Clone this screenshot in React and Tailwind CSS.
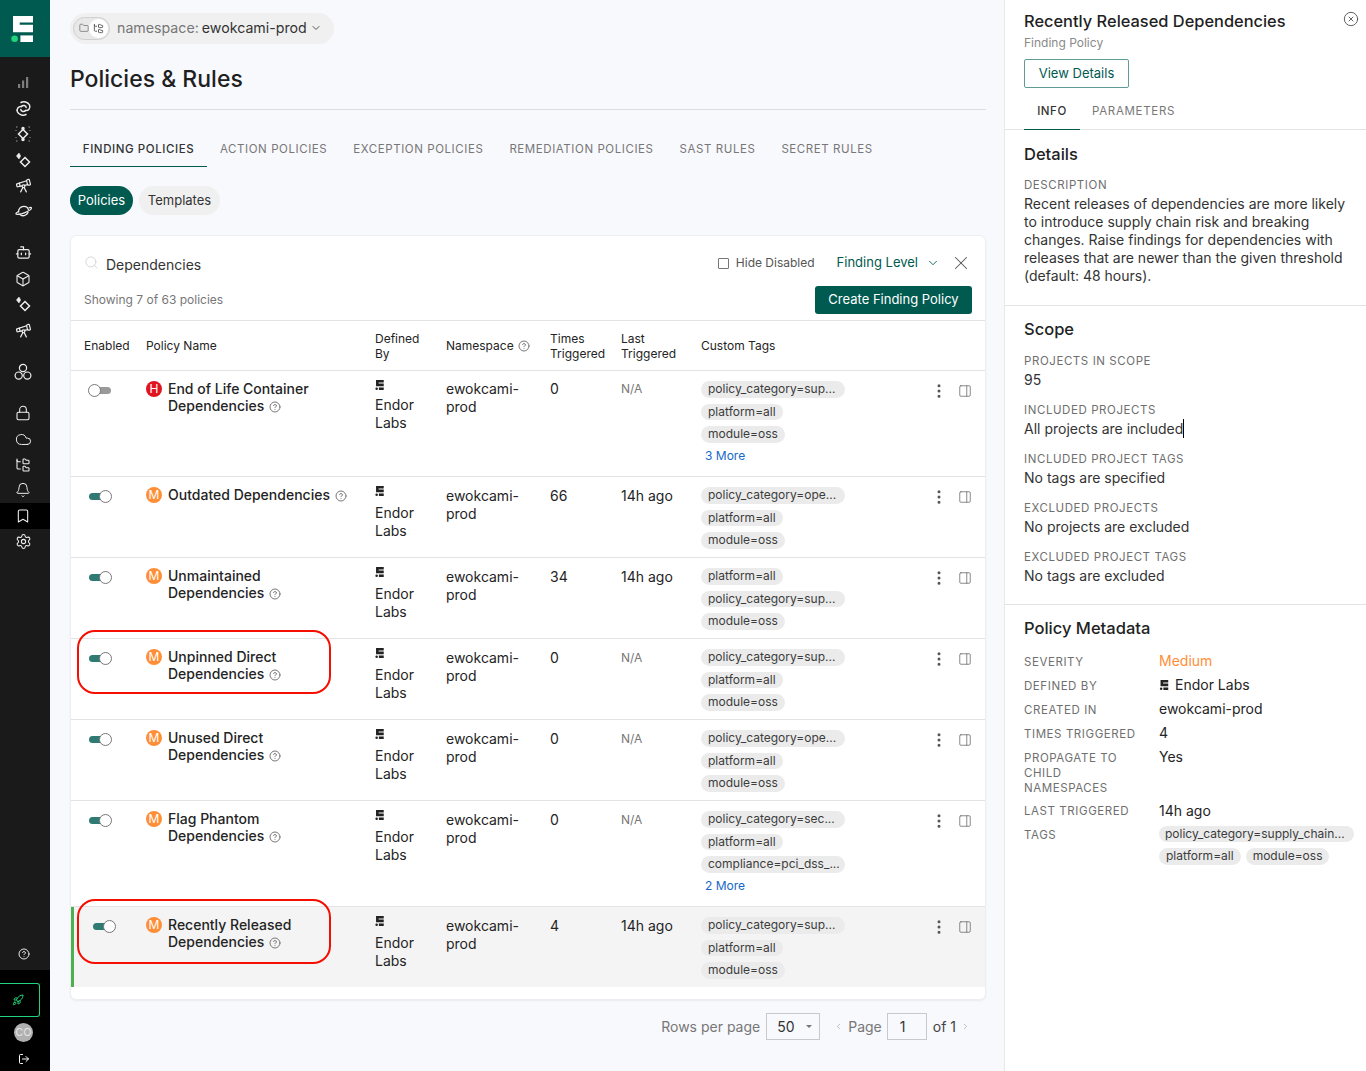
import {
  Bell, Bookmark, Bot, Box, ChevronDown, ChevronLeft, ChevronRight, CircleHelp, CircleX,
  Cloud, EllipsisVertical, FolderTree, Folder, Lock, LogOut, PanelRight, Rocket, Search,
  Settings, Telescope, X,
} from 'lucide-react';

// Endor logo mark, also used small in the table
function EndorMark({ className, dot = '#22d37a', fill = '#fff' }) {
  return (
    <svg viewBox="-2 0 22 26" className={className}>
      <path d="M0 0H20V6.600H6.700V8.800H20V16.300H0Z" fill={fill} />
      <circle cx="1.600" cy="22.700" r="3.300" fill={dot} />
      <rect x="7.400" y="19.400" width="12.600" height="6.600" fill={fill} />
    </svg>
  );
}

function Bars() {
  return (
    <svg width="12" height="13" viewBox="0 0 12 13" fill="#7d7d7d">
      <rect x="1" y="8" width="2.200" height="4" />
      <rect x="5" y="4.500" width="2.200" height="7.500" />
      <rect x="9" y="1" width="2.200" height="11" />
    </svg>
  );
}

function GalaxyIcon() {
  return (
    <svg width="17" height="17" viewBox="0 0 17 17" fill="none" stroke="currentColor" strokeWidth="1.5" strokeLinecap="round">
      <path d="M6 2.500C8.500 1 13 2 14.500 5 16 8.500 13 11 10.500 10.500" />
      <path d="M11 14.500C8.500 16 4 15 2.500 12 1 8.500 4 6 6.500 6.500" />
      <path d="M6.500 6.500C8 4.500 11 5.500 11.200 7.500M10.500 10.500C9 12.500 6 11.500 5.800 9.500" />
    </svg>
  );
}

function SparkDiamond({ size = 16 }) {
  return (
    <svg width={size} height={size} viewBox="0 0 16 16" fill="none" stroke="currentColor" strokeWidth="1.5">
      <path d="M10 5.500 14.500 10 10 14.500 5.500 10Z" />
      <path d="M4 1 5.600 4 4 7 1.500 4Z" fill="currentColor" strokeWidth="0.6" />
    </svg>
  );
}

function ScanDiamond() {
  return (
    <svg width="16" height="16" viewBox="0 0 16 16" fill="none" stroke="currentColor" strokeWidth="1.5">
      <path d="M8 3.500 12.500 8 8 12.500 3.500 8Z" />
      <circle cx="8" cy="2.400" r="1" fill="currentColor" />
      <circle cx="8" cy="13.600" r="1" fill="currentColor" />
      <path d="M1 1h1.500M13.500 1H15M1 15h1.500M13.500 15H15M1 4v1M15 4v1M1 11v1M15 11v1" strokeWidth="1" opacity="0.6" />
    </svg>
  );
}

function Planet() {
  return (
    <svg width="17" height="16" viewBox="0 0 17 16" fill="none" stroke="currentColor" strokeWidth="1.3">
      <path d="M3.600 9.500C3 6 5.600 3.300 8.800 3.300c2.400 0 4.300 1.500 4.700 3.700" />
      <path d="M13.500 5C15.300 4.300 16.300 4.300 16.400 4.900 16.600 6 13.300 8.300 9.300 9.800 5.300 11.300 1.200 11.800.9 10.800.7 10.200 1.700 9.400 3.400 8.500" />
      <path d="M4.800 11.300C6 12.700 8.600 13 10.600 12c1.200-.6 2.200-1.700 2.600-3" />
    </svg>
  );
}

function Rings() {
  return (
    <svg width="18" height="18" viewBox="0 0 18 18" fill="none" stroke="currentColor" strokeWidth="1.200">
      <circle cx="9" cy="5" r="3.600" />
      <circle cx="4.700" cy="12.600" r="3.600" />
      <circle cx="13.300" cy="12.600" r="3.600" />
    </svg>
  );
}

function NavIcon({ children, active }) {
  return (
    <div className={`flex h-[25.7px] items-center justify-center pr-[4px] text-[#eeeeee] ${active ? 'bg-black' : ''}`}>
      {children}
    </div>
  );
}

function Sidebar() {
  return (
    <aside className="flex w-[50px] shrink-0 flex-col bg-[#1a1a1a]">
      <div className="flex h-[57px] items-start bg-[#005a50] pt-4 pl-[11px]">
        <EndorMark className="h-[26px] w-[22px]" />
      </div>
      <nav className="flex-1 pt-[13px]">
        <NavIcon><Bars /></NavIcon>
        <NavIcon><GalaxyIcon /></NavIcon>
        <NavIcon><ScanDiamond /></NavIcon>
        <NavIcon><SparkDiamond /></NavIcon>
        <NavIcon><Telescope size={17} strokeWidth={1.7} /></NavIcon>
        <NavIcon><Planet /></NavIcon>
        <div className="h-4" />
        <NavIcon><Bot size={17} strokeWidth={1.7} /></NavIcon>
        <NavIcon><Box size={16} strokeWidth={1.6} /></NavIcon>
        <NavIcon><SparkDiamond /></NavIcon>
        <NavIcon><Telescope size={17} strokeWidth={1.7} /></NavIcon>
        <div className="h-4" />
        <NavIcon><Rings /></NavIcon>
        <div className="h-4" />
        <NavIcon><Lock size={16} strokeWidth={1.6} /></NavIcon>
        <NavIcon><Cloud size={17} strokeWidth={1.4} /></NavIcon>
        <NavIcon><FolderTree size={16} strokeWidth={1.6} /></NavIcon>
        <NavIcon><Bell size={16} strokeWidth={1.5} /></NavIcon>
        <NavIcon active><Bookmark size={16} strokeWidth={1.6} /></NavIcon>
        <NavIcon><Settings size={17} strokeWidth={1.5} /></NavIcon>
      </nav>
      <div className="flex h-[32px] items-start justify-center pt-[10px] pr-[2px] text-[#e8e8e8]">
        <CircleHelp size={12} />
      </div>
      <div className="flex h-[101px] flex-col bg-black pt-[13px]">
        <div className="flex h-[34px] w-[40px] items-center justify-center rounded-r-[3px] border border-l-0 border-[#22d37a] pr-[3px] text-[#22d37a]">
          <Rocket size={12} />
        </div>
        <div className="mt-[6px] ml-[14px] flex h-[19px] w-[19px] items-center justify-center rounded-full bg-[#b0b0b0] text-[11px] text-[#e4e4e4]">
          CO
        </div>
        <div className="mt-[11px] flex justify-center pr-[2px] text-white">
          <LogOut size={12} />
        </div>
      </div>
    </aside>
  );
}

const topTabs = ['Finding Policies', 'Action Policies', 'Exception Policies', 'Remediation Policies', 'SAST Rules', 'Secret Rules'];

const policies = [
  { level: 'H', name: ['End of Life Container', 'Dependencies'], off: true, times: '0', last: 'N/A', tags: ['policy_category=sup...', 'platform=all', 'module=oss'], more: '3 More', h: 'h-[106px]', first: true },
  { level: 'M', name: ['Outdated Dependencies'], times: '66', last: '14h ago', tags: ['policy_category=ope...', 'platform=all', 'module=oss'], h: 'h-[81px]' },
  { level: 'M', name: ['Unmaintained', 'Dependencies'], times: '34', last: '14h ago', tags: ['platform=all', 'policy_category=sup...', 'module=oss'], h: 'h-[81px]' },
  { level: 'M', name: ['Unpinned Direct', 'Dependencies'], times: '0', last: 'N/A', tags: ['policy_category=sup...', 'platform=all', 'module=oss'], h: 'h-[81px]', circle: 'top-[-9px] h-[64px]' },
  { level: 'M', name: ['Unused Direct', 'Dependencies'], times: '0', last: 'N/A', tags: ['policy_category=ope...', 'platform=all', 'module=oss'], h: 'h-[81px]' },
  { level: 'M', name: ['Flag Phantom', 'Dependencies'], times: '0', last: 'N/A', tags: ['policy_category=sec...', 'platform=all', 'compliance=pci_dss_...'], more: '2 More', h: 'h-[106px]' },
  { level: 'M', name: ['Recently Released', 'Dependencies'], times: '4', last: '14h ago', tags: ['policy_category=sup...', 'platform=all', 'module=oss'], h: 'h-[81px]', circle: 'top-[-8px] h-[65px]', selected: true },
];

const gridCols = 'grid grid-cols-[75px_229px_71px_104px_71px_80px_229px_1fr]';

function Toggle({ off }) {
  return (
    <div className={`relative mt-4 ml-[18px] h-[7px] w-[22px] rounded-full ${off ? 'bg-[#9a9a9a]' : 'bg-[#2f7a72]'}`}>
      <span className={`absolute top-[-3px] h-[13px] w-[13px] rounded-full border border-[#777] bg-white ${off ? 'left-[-1px]' : 'right-[-1px]'}`} />
    </div>
  );
}

function Tag({ children, full }) {
  return (
    <span className={`flex h-[16.5px] items-center rounded-full bg-[#ebebeb] px-[7px] text-xs leading-none text-[#3c3c3c] ${full ? 'w-[144px]' : 'w-fit'}`}>
      {children}
    </span>
  );
}

function PolicyRow({ row }) {
  const valueTop = row.first ? 'pt-[9px]' : 'pt-[10px]';
  return (
    <div className={`${gridCols} relative border-t border-[#e3e3e3] text-sm text-[#242424] ${row.h} ${row.selected ? 'bg-[#f4f4f4]' : ''}`}>
      {row.selected && <span className="absolute top-0 bottom-0 left-0 w-[3px] bg-[#4caf50]" />}
      {row.circle && (
        <span className={`absolute left-[6px] w-[254px] rounded-[18px] border-[2.5px] border-[#f50e02] ${row.circle}`} />
      )}
      <div className={row.selected ? 'pl-[4px]' : ''}>
        <Toggle off={row.off} />
      </div>
      <div className="flex gap-[6px] pt-[9px]">
        <span className={`mt-[1px] flex h-4 w-4 shrink-0 items-center justify-center rounded-full text-[12px] leading-none text-white ${row.level === 'H' ? 'bg-[#e0141f]' : 'bg-[#ff8e38]'}`}>
          {row.level}
        </span>
        <div className="text-sm leading-[17px] font-[450]">
          {row.name.map((line, i) => (
            <div key={line}>
              {line}
              {i === row.name.length - 1 && <CircleHelp size={12} className="ml-[5px] inline align-[-2px] text-[#777]" />}
            </div>
          ))}
        </div>
      </div>
      <div className="pt-[9px] leading-[18px]">
        <EndorMark className={`h-[10px] w-[9px] ${row.first ? 'mb-[6px]' : 'mb-2'}`} fill="#222" dot="#222" />
        <div>Endor</div>
        <div>Labs</div>
      </div>
      <div className={`${valueTop} leading-[18px]`}>
        <div>ewokcami-</div>
        <div>prod</div>
      </div>
      <div className={`${valueTop} leading-[18px]`}>{row.times}</div>
      <div className={`${valueTop} leading-[18px] ${row.last === 'N/A' ? 'text-xs text-[#777]' : ''}`}>{row.last}</div>
      <div className="flex flex-col gap-[6px] pt-[10px]">
        {row.tags.map((t) => (
          <Tag key={t} full={t.length > 15}>{t}</Tag>
        ))}
        {row.more && <span className="mt-[-2px] pl-[4px] text-xs leading-[18px] text-[#1668c7]">{row.more}</span>}
      </div>
      <div className="flex items-start gap-[10px] pt-[11px] text-[#666]">
        <EllipsisVertical size={18} className="text-[#555]" />
        <PanelRight size={14} strokeWidth={1.3} className="mt-[2px]" />
      </div>
    </div>
  );
}

function PoliciesCard() {
  return (
    <section className="mt-5 flex h-[765px] flex-col rounded-md border border-[#eceef3] bg-white shadow-[0_1px_2px_rgba(0,0,0,0.06)]">
      <div className="flex h-[84px] flex-col px-[13px]">
        <div className="flex items-center pt-[19px]">
          <Search size={15} strokeWidth={1.3} className="mt-[-5px] text-[#cfcfcf]" />
          <span className="ml-[7px] text-sm text-[#333]">Dependencies</span>
          <label className="mt-[-4px] ml-auto flex items-center gap-[7px] text-xs text-[#555]">
            <span className="h-[11px] w-[11px] rounded-[1px] border border-[#777]" />
            Hide Disabled
          </label>
          <span className="mt-[-4px] ml-[22px] text-[13px] text-[#005a50]">Finding Level</span>
          <ChevronDown size={14} strokeWidth={1.5} className="mt-[-4px] ml-2 text-[#005a50]" />
          <X size={22} strokeWidth={1.1} className="mt-[-4px] ml-[10px] text-[#555]" />
        </div>
        <div className="mt-[11px] flex items-center justify-between">
          <span className="text-xs text-[#777]">Showing 7 of 63 policies</span>
          <button className="flex h-[28px] w-[157px] items-center justify-center rounded-[3px] bg-[#005a50] text-[13px] text-white">
            Create Finding Policy
          </button>
        </div>
      </div>
      <div className={`${gridCols} h-[50px] items-center border-t border-[#e3e3e3] text-xs leading-[15px] text-[#242424]`}>
        <div className="pl-[13px]">Enabled</div>
        <div>Policy Name</div>
        <div>Defined<br />By</div>
        <div className="flex items-center gap-[4px]">Namespace <CircleHelp size={12} className="text-[#777]" /></div>
        <div>Times<br />Triggered</div>
        <div>Last<br />Triggered</div>
        <div>Custom Tags</div>
        <div />
      </div>
      {policies.map((row) => (
        <PolicyRow key={row.name[0]} row={row} />
      ))}
    </section>
  );
}

function Pagination() {
  return (
    <div className="mt-[13px] flex items-center justify-end pr-[16px] text-sm text-[#777]">
      <span>Rows per page</span>
      <div className="ml-[6px] flex h-[27px] w-[54px] items-center gap-[11px] border border-[#c9c9c9] pl-[10px] text-[#333]">
        50
        <span className="h-0 w-0 border-x-[3px] border-t-[3px] border-x-transparent border-t-[#777]" />
      </div>
      <ChevronLeft size={9} className="ml-[14px] text-[#aaa]" />
      <span className="ml-[5px]">Page</span>
      <div className="ml-[5px] flex h-[27px] w-[40px] items-center border border-[#c9c9c9] pl-[12px] text-[#333]">1</div>
      <span className="ml-[6px] text-[#444]">of 1</span>
      <ChevronRight size={9} className="ml-[5px] text-[#aaa]" />
    </div>
  );
}

function Label({ children, className = '' }) {
  return <div className={`text-[11.5px] leading-[15px] tracking-[0.05em] text-[#6f6f6f] uppercase ${className}`}>{children}</div>;
}

const scopeItems = [
  ['Projects in Scope', '95'],
  ['Included Projects', 'All projects are included'],
  ['Included Project Tags', 'No tags are specified'],
  ['Excluded Projects', 'No projects are excluded'],
  ['Excluded Project Tags', 'No tags are excluded'],
];

function MetaRow({ label, children }) {
  return (
    <div className="grid grid-cols-[135px_1fr] items-start text-sm leading-[18px] text-[#242424]">
      <Label className="pt-[2.5px] pr-[16px]">{label}</Label>
      <div>{children}</div>
    </div>
  );
}

function DetailPanel() {
  return (
    <aside className="w-[362px] shrink-0 border-l border-[#e8e8e8] bg-white">
      <div className="relative px-[19px] pt-[10px]">
        <CircleX size={16} strokeWidth={1.4} className="absolute top-[11px] right-[7px] text-[#555]" />
        <h2 className="text-[16.4px] leading-[22px] font-medium text-[#1f1f1f]">Recently Released Dependencies</h2>
        <div className="mt-[3px] text-xs leading-[16px] text-[#8a8a8a]">Finding Policy</div>
        <button className="mt-[8px] flex h-[29px] w-[105px] items-center justify-center rounded-[2px] border border-[#5f9c95] text-[13px] text-[#005a50]">
          View Details
        </button>
      </div>
      <div className="mt-[11px] flex h-[31px] items-start border-b border-[#e3e3e3] px-[19px] text-[11.5px] leading-[15px] tracking-[0.06em] uppercase">
        <div className="h-[31px] w-[56px] border-b border-[#005a50] pt-[5px] text-center font-medium tracking-[0.05em] text-[#333]">Info</div>
        <div className="ml-[12px] pt-[5px] text-[#777]">Parameters</div>
      </div>
      <section className="h-[176px] border-b border-[#e3e3e3] px-[19px] pt-[13px]">
        <h3 className="text-[16.5px] leading-[22px] font-medium text-[#222]">Details</h3>
        <Label className="mt-[13px]">Description</Label>
        <p className="mt-[2px] text-sm leading-[18px] text-[#333]">
          Recent releases of dependencies are more likely to introduce supply chain risk and breaking changes. Raise findings for dependencies with releases that are newer than the given threshold (default: 48 hours).
        </p>
      </section>
      <section className="h-[299px] border-b border-[#e3e3e3] px-[19px] pt-[12px]">
        <h3 className="text-[16.5px] leading-[22px] font-medium text-[#222]">Scope</h3>
        <div className="mt-[14px] flex flex-col gap-[14px]">
          {scopeItems.map(([label, value]) => (
            <div key={label}>
              <Label>{label}</Label>
              <div className={`mt-[1px] text-sm leading-[19px] text-[#333] ${label === 'Included Projects' ? 'w-fit border-r border-black' : ''}`}>{value}</div>
            </div>
          ))}
        </div>
      </section>
      <section className="px-[19px] pt-[12px]">
        <h3 className="text-[16.5px] leading-[22px] font-medium text-[#222]">Policy Metadata</h3>
        <div className="mt-[13px] flex flex-col gap-[6px]">
          <MetaRow label="Severity"><span className="text-[#ff8e38]">Medium</span></MetaRow>
          <MetaRow label="Defined By">
            <span className="flex items-center gap-[6px]">
              <EndorMark className="h-[10px] w-[10px]" fill="#222" dot="#222" /> Endor Labs
            </span>
          </MetaRow>
          <MetaRow label="Created In">ewokcami-prod</MetaRow>
          <MetaRow label="Times Triggered">4</MetaRow>
          <MetaRow label="Propagate to Child Namespaces">Yes</MetaRow>
          <MetaRow label="Last Triggered">14h ago</MetaRow>
          <MetaRow label="Tags">
            <div className="flex flex-wrap gap-x-[5px] gap-y-[6px]">
              <span className="flex h-[16.5px] w-[195px] items-center rounded-full bg-[#ebebeb] px-[6px] text-xs leading-none text-[#3c3c3c]">policy_category=supply_chain...</span>
              <Tag>platform=all</Tag>
              <Tag>module=oss</Tag>
            </div>
          </MetaRow>
        </div>
      </section>
    </aside>
  );
}

export default function App() {
  return (
    <div className="flex h-[1071px] w-[1366px] overflow-hidden bg-[#f8f9fd] font-['Inter',sans-serif]">
      <Sidebar />
      <main className="min-w-0 flex-1 pt-[13px] pr-[18px] pl-[20px]">
        <div className="flex h-[31px] w-[264px] items-center rounded-full bg-[#f0f0f0] pb-[1px] pl-[3px] text-[14.2px]">
          <span className="flex h-[23px] w-[37px] items-center justify-between rounded-full border border-[#cfcfcf] bg-[#e8e8e8] pr-[1px] pl-[5px]">
            <Folder size={10} className="text-[#777]" />
            <span className="flex h-[19px] w-[19px] items-center justify-center rounded-full bg-white">
              <FolderTree size={11} className="text-[#555]" />
            </span>
          </span>
          <span className="ml-[7px] text-[#777]">namespace:</span>
          <span className="ml-[3px] text-[#333]">ewokcami-prod</span>
          <ChevronDown size={12} className="ml-[3px] text-[#555]" />
        </div>
        <h1 className="mt-[20px] text-[23px] leading-[30px] font-medium text-[#1f1f1f]">Policies &amp; Rules</h1>
        <div className="mt-[15px] border-t border-[#dcdde3]" />
        <div className="mt-[22px] flex text-[11.5px] tracking-[0.05em] text-[#777] uppercase">
          {topTabs.map((tab, i) => (
            <div
              key={tab}
              className={`h-[35px] pt-[10px] leading-[15px] ${i === 0 ? 'w-[137px] border-b border-[#005a50] text-center font-medium text-[#333]' : 'px-[13px]'}`}
            >
              {tab}
            </div>
          ))}
        </div>
        <div className="mt-[19px] flex gap-[6px] text-[13px]">
          <span className="flex h-[29px] w-[63px] items-center justify-center rounded-full bg-[#005a50] pt-[1px] text-white">Policies</span>
          <span className="flex h-[29px] w-[81px] items-center justify-center rounded-full bg-[#f0f0f0] pt-[1px] text-[#333]">Templates</span>
        </div>
        <PoliciesCard />
        <Pagination />
      </main>
      <DetailPanel />
    </div>
  );
}
